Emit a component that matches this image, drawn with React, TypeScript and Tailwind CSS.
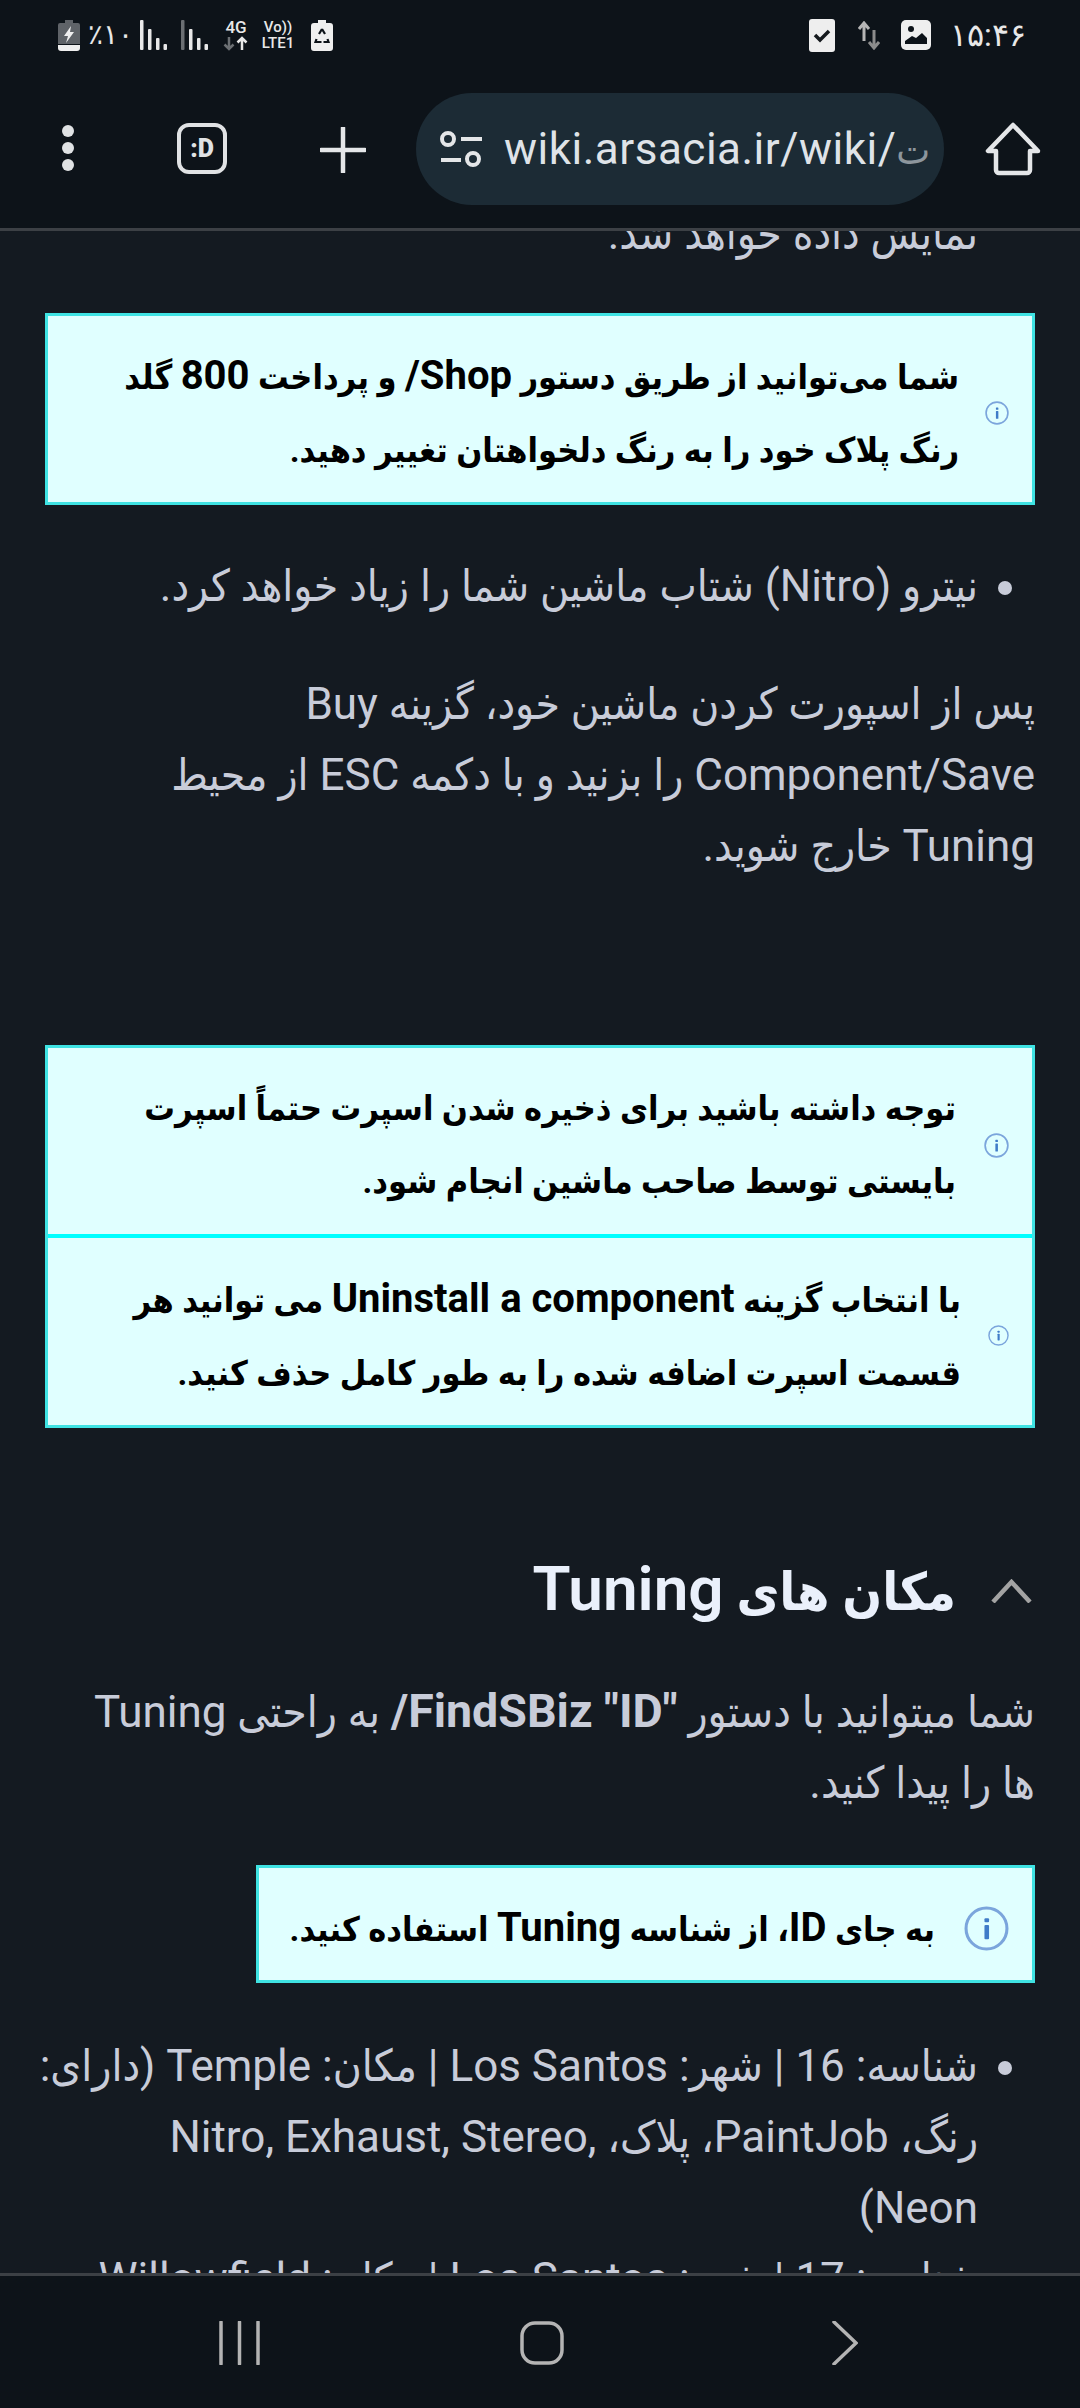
import React from "react";

const bodyFont = "font-['Roboto','DejaVu_Sans_Condensed','DejaVu_Sans',sans-serif]";

const InfoIcon = ({ size }: { size: number }) => (
  <svg width={size} height={size} viewBox="0 0 44 44" className="shrink-0">
    <circle cx="22" cy="22" r="20" fill="none" stroke="#7ba5dc" strokeWidth="3" />
    <rect x="20" y="12" width="4.5" height="4" rx="1" fill="#3f7cc8" />
    <rect x="20" y="18.5" width="4.5" height="14" rx="1" fill="#3f7cc8" />
  </svg>
);

const Signal = ({ dim }: { dim?: boolean }) => (
  <svg width="27" height="30" viewBox="0 0 27 30">
    <rect x="0" y="0" width="3.5" height="30" rx="1" fill={dim ? "#6b6f73" : "#e8e8e8"} />
    <rect x="8" y="9" width="3.5" height="21" rx="1" fill="#e8e8e8" />
    <rect x="16" y="18" width="3.5" height="12" rx="1" fill="#e8e8e8" />
    <rect x="23.5" y="24" width="3.5" height="6" rx="1" fill="#e8e8e8" />
  </svg>
);

// latin words in the callouts sit larger than the persian around them
const Lat = ({ children }: { children: React.ReactNode }) => (
  <span className="text-[40px]">{children}</span>
);

const StatusBar = () => (
  <div className="h-[70px] flex items-center justify-between pl-[58px] pr-[60px] text-[#e8e8e8] font-['Roboto',sans-serif]">
    <div className="flex items-center">
      {/* charging battery */}
      <svg width="22" height="31" viewBox="0 0 22 31">
        <path d="M7 0h8v3h5a2 2 0 0 1 2 2v19H0V5a2 2 0 0 1 2-2h5z" fill="#5f6368" />
        <path d="M0 25h22v3a3 3 0 0 1-3 3H3a3 3 0 0 1-3-3z" fill="#efefef" />
        <path d="M13 6l-7 10h4l-2 7 8-11h-4z" fill="#efefef" />
      </svg>
      <span className="ml-[8px] w-[37px] text-[28px] leading-none">٪۱۰</span>
      <div className="ml-[15px]"><Signal /></div>
      <div className="ml-[14px]"><Signal dim /></div>
      <div className="ml-[15px] flex flex-col items-center w-[26px]">
        <span className="text-[17px] leading-[17px] font-medium">4G</span>
        <svg width="26" height="15" viewBox="0 0 26 15">
          <path d="M6 1v12M1.5 8.5L6 13l4.5-4.500" stroke="#6b6f73" strokeWidth="2.500" fill="none" />
          <path d="M19 14V2M14.500 6.500L19 2l4.500 4.500" stroke="#e8e8e8" strokeWidth="2.500" fill="none" />
        </svg>
      </div>
      <div className="ml-[10px] flex flex-col items-center w-[38px]">
        <span className="text-[15px] leading-[17px] font-medium">Vo))</span>
        <span className="text-[15px] leading-[15px] font-medium">LTE1</span>
      </div>
      {/* battery saver */}
      <svg className="ml-[14px]" width="22" height="31" viewBox="0 0 22 31">
        <path d="M7 0h8v3h4a3 3 0 0 1 3 3v22a3 3 0 0 1-3 3H3a3 3 0 0 1-3-3V6a3 3 0 0 1 3-3h4z" fill="#efefef" />
        <path d="M11 9l-3 5M11 9l3 5M5.500 19l-1 3h6M16.500 19l1 3h-5" stroke="#0d1319" strokeWidth="2.200" fill="none" />
      </svg>
    </div>
    <div className="flex items-center">
      <svg width="26" height="33" viewBox="0 0 26 33">
        <rect width="26" height="33" rx="3" fill="#eeeeee" />
        <path d="M6 16l5 5 9-9" stroke="#15191d" strokeWidth="3.500" fill="none" />
      </svg>
      <svg className="ml-[23px]" width="22" height="29" viewBox="0 0 22 29">
        <path d="M6 20V3M1 8l5-6 5 6" stroke="#b5b5b5" strokeWidth="3" fill="none" />
        <path d="M16 9v17M11 21l5 6 5-6" stroke="#8c8c8c" strokeWidth="3" fill="none" />
      </svg>
      <svg className="ml-[21px]" width="30" height="30" viewBox="0 0 30 30">
        <rect width="30" height="30" rx="5" fill="#efefef" />
        <circle cx="10" cy="9" r="3" fill="#0d1319" />
        <path d="M4 24v-3l7-5 4 2 6-5 5 5v6z" fill="#0d1319" />
      </svg>
      <span className="ml-[19px] w-[70px] text-[32px] leading-none text-center">۱۵:۴۶</span>
    </div>
  </div>
);

const Toolbar = () => (
  <div className="h-[158px] flex items-start pt-[23px]">
    <div className="w-[68px] shrink-0 flex justify-end">
      <div className="flex flex-col gap-[5px] mt-[32px] translate-x-[6px]">
        <span className="w-[12px] h-[12px] rounded-full bg-[#e0e2e4]" />
        <span className="w-[12px] h-[12px] rounded-full bg-[#e0e2e4]" />
        <span className="w-[12px] h-[12px] rounded-full bg-[#e0e2e4]" />
      </div>
    </div>
    <div className="ml-[109px] mt-[30px] w-[50px] h-[51px] rounded-[12px] border-[4px] border-[#e0e2e4] flex items-center justify-center text-[#e0e2e4] text-[25px] font-black font-['Roboto',sans-serif]">
      :D
    </div>
    <svg className="ml-[93px] mt-[34px]" width="46" height="46" viewBox="0 0 46 46">
      <path d="M23 1v44M1 23h44" stroke="#e4e6e8" strokeWidth="4.500" strokeLinecap="round" />
    </svg>
    <div className="ml-[50px] w-[528px] h-[112px] rounded-[56px] bg-[#1c2b35] flex items-center pl-[24px] overflow-hidden">
      <svg width="43" height="36" viewBox="0 0 43 36" className="shrink-0">
        <circle cx="8" cy="8" r="6" fill="none" stroke="#e4e6e8" strokeWidth="4" />
        <path d="M21 8h21M1 29h20" stroke="#e4e6e8" strokeWidth="4" />
        <circle cx="33" cy="28" r="6" fill="none" stroke="#e4e6e8" strokeWidth="4" />
      </svg>
      <span className="ml-[21px] text-[44px] leading-none text-[#dfe3e8] whitespace-nowrap font-['Roboto','DejaVu_Sans_Condensed','DejaVu_Sans',sans-serif] tracking-[0.5px]">
        wiki.arsacia.ir/wiki/<span className="text-[#8d969d] text-[40px]">ت</span>
      </span>
    </div>
    <svg className="ml-[41px] mt-[29px]" width="56" height="54" viewBox="0 0 56 54">
      <path d="M28 3L3 29h8v19a3 3 0 0 0 3 3h28a3 3 0 0 0 3-3V29h8z" fill="none" stroke="#e4e6e8" strokeWidth="4.500" strokeLinejoin="round" />
    </svg>
  </div>
);

const Article = () => (
  <main dir="rtl" className={`flex-1 overflow-hidden px-[45px] text-[#c8ccd9] text-[44px] leading-[71px] ${bodyFont}`}>
    <p className="-mt-[32px] pr-[57px]">نمایش داده خواهد شد.</p>

    <div className="mt-[43px] h-[192px] pt-[8px] border-[3px] border-[#3fe3e3] bg-[#e0ffff] flex items-center pr-[23px] text-black font-bold text-[34px] leading-[73px]">
      <InfoIcon size={24} />
      <p className="mr-[26px] whitespace-nowrap">
        شما می‌توانید از طریق دستور <bdi dir="ltr"><Lat>/Shop</Lat></bdi> و پرداخت <Lat>800</Lat> گلد
        <br />
        رنگ پلاک خود را به رنگ دلخواهتان تغییر دهید.
      </p>
    </div>

    <ul className="mt-[46px] list-disc pr-[57px]">
      <li>نیترو (Nitro) شتاب ماشین شما را زیاد خواهد کرد.</li>
    </ul>

    <p className="mt-[47px] whitespace-nowrap">
      پس از اسپورت کردن ماشین خود، گزینه Buy
      <br />
      Component/Save را بزنید و با دکمه ESC از محیط
      <br />
      Tuning خارج شوید.
    </p>

    <div className="mt-[163px] border-[3px] border-[#3fe3e3] bg-[#e0ffff] text-black font-bold text-[34px] leading-[73px]">
      <div className="h-[186px] pt-[8px] flex items-center pr-[23px]">
        <InfoIcon size={25} />
        <p className="mr-[28px] whitespace-nowrap">
          توجه داشته باشید برای ذخیره شدن اسپرت حتماً اسپرت
          <br />
          بایستی توسط صاحب ماشین انجام شود.
        </p>
      </div>
      <div className="h-[191px] pt-[8px] border-t-[4px] border-[#00ffff] flex items-center pr-[23px]">
        <InfoIcon size={21} />
        <p className="mr-[27px] whitespace-nowrap">
          با انتخاب گزینه <Lat>Uninstall a component</Lat> می توانید هر
          <br />
          قسمت اسپرت اضافه شده را به طور کامل حذف کنید.
        </p>
      </div>
    </div>

    <h2 className="mt-[126px] flex items-center text-[#eaf0fb] font-semibold text-[52px] leading-[70px]">
      <svg className="mr-[3px]" width="41" height="24" viewBox="0 0 41 24">
        <path d="M2 23L20.500 3 39 23" fill="none" stroke="#a3a3a3" strokeWidth="4.500" />
      </svg>
      <span className="mr-[35px]">
        مکان های <span className="text-[62px]">Tuning</span>
      </span>
    </h2>

    <p className="mt-[48px] whitespace-nowrap">
      شما میتوانید با دستور{" "}
      <bdi dir="ltr" className="font-bold text-[46.5px]">/FindSBiz "ID"</bdi> به راحتی Tuning
      <br />
      ها را پیدا کنید.
    </p>

    <div className="mt-[46px] flex justify-start">
      <div className="w-[779px] h-[118px] pt-[8px] border-[3px] border-[#3fe3e3] bg-[#e0ffff] flex items-center pr-[23px] text-black font-bold text-[34px]">
        <InfoIcon size={45} />
        <p className="mr-[29px] whitespace-nowrap">
          به جای <Lat>ID</Lat>، از شناسه <Lat>Tuning</Lat> استفاده کنید.
        </p>
      </div>
    </div>

    <ul className="mt-[48px] list-disc pr-[57px] whitespace-nowrap">
      <li>
        شناسه: 16 | شهر: Los Santos | مکان: Temple (دارای:
        <br />
        رنگ، PaintJob، پلاک، <bdi dir="ltr">Nitro, Exhaust, Stereo,</bdi>
        <br />
        Neon)
      </li>
      <li>شناسه: 17 | شهر: Los Santos | مکان: Willowfield</li>
    </ul>
  </main>
);

const BottomNav = () => (
  <nav className="h-[135px] shrink-0 bg-[#0d1319] border-t-[3px] border-[#3c4045] flex items-start pt-[45px]">
    <svg className="ml-[219px]" width="41" height="44" viewBox="0 0 41 44">
      <path d="M2 1v42M20.500 1v42M39 1v42" stroke="#b4b4b4" strokeWidth="3.500" strokeLinecap="round" />
    </svg>
    <svg className="ml-[260px]" width="44" height="44" viewBox="0 0 44 44">
      <rect x="2" y="2" width="40" height="40" rx="13" fill="none" stroke="#b4b4b4" strokeWidth="3.500" />
    </svg>
    <svg className="ml-[268px]" width="26" height="44" viewBox="0 0 26 44">
      <path d="M2 1l22 21L2 43" fill="none" stroke="#b4b4b4" strokeWidth="3.500" strokeLinecap="round" />
    </svg>
  </nav>
);

export default function App() {
  return (
    <div className="w-[1080px] h-[2408px] flex flex-col bg-[#141a21] overflow-hidden">
      <header className="h-[231px] shrink-0 bg-[#0d1319] border-b-[3px] border-[#3c4045]">
        <StatusBar />
        <Toolbar />
      </header>
      <Article />
      <BottomNav />
    </div>
  );
}
